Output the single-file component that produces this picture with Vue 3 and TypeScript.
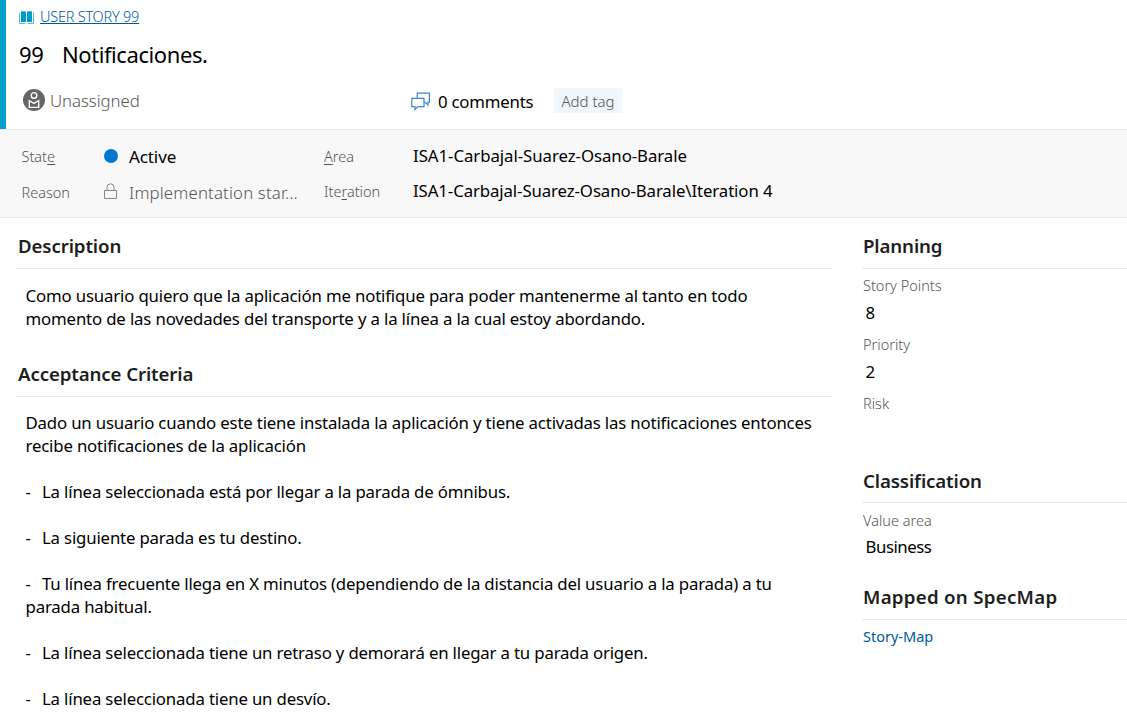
<script setup lang="ts">
interface Field { label: string; value: string }

const planning: Field[] = [
  { label: 'Story Points', value: '8' },
  { label: 'Priority', value: '2' },
  { label: 'Risk', value: '' },
]

const criteria: string[][] = [
  ['La línea seleccionada está por llegar a la parada de ómnibus.'],
  ['La siguiente parada es tu destino.'],
  ['Tu línea frecuente llega en X minutos (dependiendo de la distancia del usuario a la parada) a tu', 'parada habitual.'],
  ['La línea seleccionada tiene un retraso y demorará en llegar a tu parada origen.'],
  ['La línea seleccionada tiene un desvío.'],
]
</script>

<template>
  <div class="work-item">
    <header class="head">
      <div class="type-row">
        <svg class="book" width="15" height="13" viewBox="0 0 15 13">
          <path d="M0.5 1.5V12.5H6.5M14.5 1.5V12.5H8.5" fill="none" stroke="#5cb9dc" />
          <path d="M2 0.3H5.6Q7 0.3 7 1.4V11H2ZM8 1.4Q8 0.3 9.4 0.3H13V11H8Z" fill="#009ccc" />
        </svg>
        <a class="type-link">USER STORY 99</a>
      </div>
      <h1 class="title"><span class="id">99</span><span class="name">Notificaciones.</span></h1>
      <div class="people-row">
        <div class="assignee">
          <svg width="22" height="22" viewBox="0 0 22 22">
            <circle cx="11" cy="11" r="11" fill="#666" />
            <circle cx="11" cy="6.4" r="2.8" fill="none" stroke="#fff" stroke-width="1.4" />
            <path d="M6.3 11.7V18.4H15.7V11.7L11 14.4Z" fill="none" stroke="#fff" stroke-width="1.4" />
          </svg>
          <span>Unassigned</span>
        </div>
        <div class="comments">
          <svg width="20" height="19" viewBox="0 0 20 19" fill="none" stroke="#3a86d8" stroke-width="1.2">
            <path d="M6.3 6.4V1.2H18.4V10.2H17V13L14.2 10.4H13.2" />
            <path d="M0.8 6.4H13V14.6H7L4 17.6V14.6H0.8Z" />
          </svg>
          <span>0 comments</span>
        </div>
        <button class="tag">Add tag</button>
      </div>
    </header>

    <section class="meta">
      <div class="state-col">
        <div class="row">
          <label>Stat<u>e</u></label>
          <span class="mark"><i class="dot"></i></span>
          <span class="active">Active</span>
        </div>
        <div class="row">
          <label>Reason</label>
          <span class="mark">
            <svg class="lock" width="13" height="17" viewBox="0 0 13 17" fill="none" stroke="#888">
              <path d="M0.5 7.5H12.5V15.5H0.5ZM3 7.5V4.5A3.5 3.7 0 0 1 10 4.5V7.5" />
            </svg>
          </span>
          <span class="reason">Implementation star...</span>
        </div>
      </div>
      <div class="path-col">
        <div class="row"><label><u>A</u>rea</label><span class="path area">ISA1-Carbajal-Suarez-Osano-Barale</span></div>
        <div class="row"><label>Ite<u>r</u>ation</label><span class="path">ISA1-Carbajal-Suarez-Osano-Barale\Iteration 4</span></div>
      </div>
    </section>

    <main class="body">
      <div class="main-col">
        <section>
          <h2>Description</h2>
          <p class="text desc">Como usuario quiero que la aplicación me notifique para poder mantenerme al tanto en todo<br>momento de las novedades del transporte y a la línea a la cual estoy abordando.</p>
        </section>
        <section class="acceptance">
          <h2>Acceptance Criteria</h2>
          <div class="text crit">
            <p>Dado un usuario cuando este tiene instalada la aplicación y tiene activadas las notificaciones entonces<br>recibe notificaciones de la aplicación</p>
            <p v-for="item in criteria" :key="item[0]">
              <span class="dash">-</span><template v-for="(line, i) in item" :key="line"><br v-if="i">{{ line }}</template>
            </p>
          </div>
        </section>
      </div>
      <aside class="side-col">
        <section class="planning">
          <h2>Planning</h2>
          <div v-for="f in planning" :key="f.label" class="field">
            <label>{{ f.label }}</label>
            <span class="value">{{ f.value }}</span>
          </div>
        </section>
        <section class="classification">
          <h2>Classification</h2>
          <div class="field">
            <label>Value area</label>
            <span class="value">Business</span>
          </div>
        </section>
        <section class="mapped">
          <h2>Mapped on SpecMap</h2>
          <a class="map-link">Story-Map</a>
        </section>
      </aside>
    </main>
  </div>
</template>

<style>
body { margin: 0; background: #fff; overflow: hidden; }
</style>

<style scoped>
.work-item {
  box-sizing: border-box;
  width: 1127px;
  height: 726px;
  overflow: hidden;
  font-family: "Noto Sans", "Open Sans", sans-serif;
  font-size: 16.8px;
  font-weight: 400;
  color: #000;
  white-space: nowrap;
}
h1, h2, p { margin: 0; }
.head {
  box-sizing: border-box;
  height: 129px;
  padding: 6px 0 0 13px;
  border-left: 6px solid #009ccc;
}
.type-row { display: flex; height: 20px; }
.book { margin-top: 5px; }
.type-link {
  margin-left: 6px;
  font-size: 14.5px;
  font-weight: 300;
  line-height: 20px;
  letter-spacing: -0.23px;
  color: #005a9e;
  text-decoration: underline;
  text-decoration-thickness: 1px;
  text-underline-offset: 1px;
}
.title {
  display: flex;
  margin-top: 12px;
  font-size: 22px;
  font-weight: 400;
  line-height: 32px;
  letter-spacing: -0.42px;
}
.id { width: 43px; }
.people-row { display: flex; margin-top: 18px; height: 27px; }
.assignee {
  display: flex;
  width: 388px;
  padding-left: 4px;
  line-height: 25px;
  font-weight: 300;
  letter-spacing: -0.04px;
  color: #555;
}
.assignee svg { margin: 1px 5px 0 0; }
.comments {
  display: flex;
  width: 143px;
  line-height: 27px;
  letter-spacing: -0.22px;
}
.comments svg { margin: 4px 7px 0 0; }
.tag {
  width: 68px;
  height: 25px;
  padding: 0;
  border: 0;
  background: #eff6fc;
  font: 300 15px/26px "Noto Sans", sans-serif;
  color: #555;
}
.meta {
  box-sizing: border-box;
  display: flex;
  height: 89px;
  padding: 8px 0 0 21.5px;
  border-top: 1px solid #eaeaea;
  border-bottom: 1px solid #eaeaea;
  background: #f8f8f8;
}
label {
  font-size: 14.5px;
  font-weight: 300;
  line-height: 20px;
  color: #555;
}
u { text-decoration-thickness: 1px; text-underline-offset: 2px; }
.row { display: flex; align-items: center; }
.state-col { width: 302.5px; }
.state-col .row { height: 36px; }
.state-col label { width: 82.5px; }
.mark { display: flex; width: 25px; }
.dot { width: 14px; height: 14px; border-radius: 50%; background: #0078d4; }
.lock { margin: -1px 0 0 -0.5px; }
.active { font-size: 17px; letter-spacing: -0.1px; }
.reason { font-weight: 300; letter-spacing: 0.17px; color: #555; }
.path-col .row { height: 35px; }
.path-col label { width: 89px; }
.path { letter-spacing: -0.1px; }
.area { letter-spacing: -0.05px; }
.body { display: flex; }
.main-col { width: 817px; margin: 0 29px 0 16px; }
.side-col { flex: 1; }
h2 {
  padding: 16px 0 10px 2px;
  border-bottom: 1px solid #eaeaea;
  font-size: 18.7px;
  font-weight: 600;
  line-height: 24px;
  letter-spacing: -0.13px;
  color: #1e1e1e;
}
.side-col h2 { padding-left: 1px; }
.text { padding-left: 9.5px; line-height: 23px; letter-spacing: -0.155px; }
.desc { margin-top: 15px; }
.acceptance { margin-top: 16px; }
.crit { display: flex; flex-direction: column; gap: 23px; margin-top: 14px; letter-spacing: -0.17px; }
.dash { display: inline-block; width: 16.5px; }
.field { display: flex; flex-direction: column; height: 59px; }
.side-col label { margin: 0 0 6px 1px; }
.value { padding-left: 3.5px; line-height: 23px; letter-spacing: -0.45px; }
.planning h2 { margin-bottom: 6px; }
.planning .field:last-child { height: 60px; }
.classification h2 { padding-bottom: 9px; margin-bottom: 7px; }
.side-col .classification label { margin-bottom: 5px; }
.classification .field { height: 59px; }
.side-col .mapped h2 { letter-spacing: 0.27px; margin-bottom: 4px; }
.map-link {
  margin-left: 1px;
  font-size: 14.5px;
  line-height: 20px;
  color: #005a9e;
}
</style>
